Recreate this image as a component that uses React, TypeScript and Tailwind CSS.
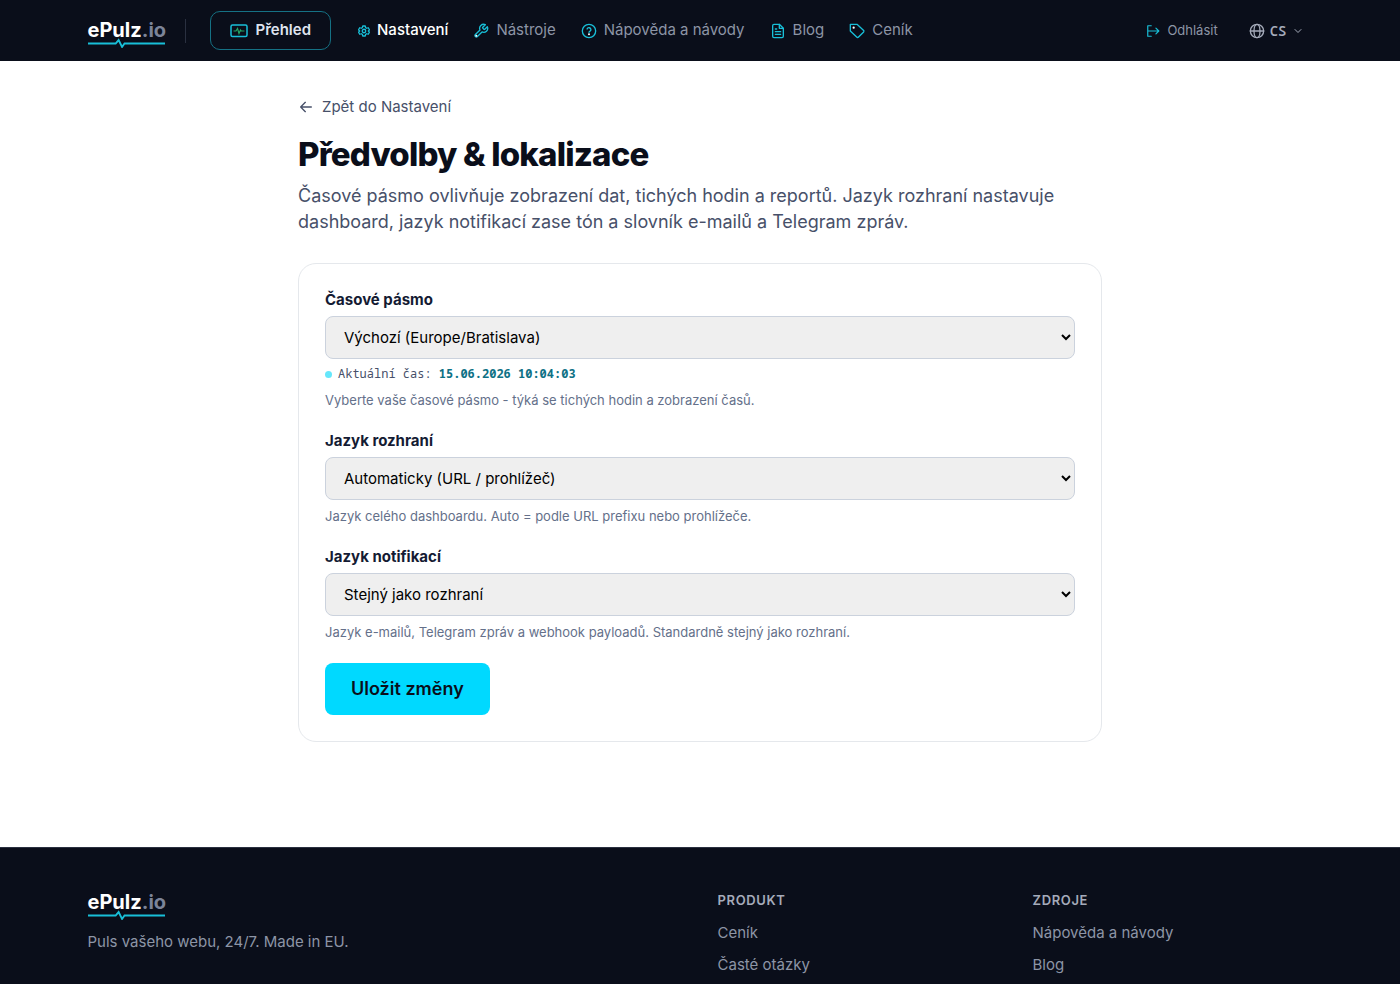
import type { ReactNode } from "react";
import { clsx } from "clsx";

const NAV: { label: string; icon: ReactNode; active?: boolean; small?: boolean }[] = [
  {
    label: "Nastavení",
    active: true,
    small: true,
    icon: (
      <>
        <path
          d="M9.500 2h5l.8 3.300 2 1.200 3.300-1 2.400 4.200-2.400 2.300 2.400 2.300-2.400 4.200-3.300-1-2 1.200-.8 3.300h-5l-.8-3.300-2-1.200-3.300 1L1 14.300 3.400 12 1 9.700l2.400-4.200 3.300 1 2-1.200z"
          strokeWidth="2.600"
        />
        <circle cx="12" cy="12" r="3.500" strokeWidth="2.600" />
      </>
    ),
  },
  {
    label: "Nástroje",
    icon: (
      <>
        <path d="M14.700 6.300a1 1 0 0 0 0 1.400l1.600 1.600a1 1 0 0 0 1.400 0l3.770-3.770a6 6 0 0 1-7.940 7.940l-6.910 6.910a2.120 2.120 0 0 1-3-3l6.910-6.910a6 6 0 0 1 7.940-7.940z" />
        <circle cx="5" cy="19" r="1.500" className="fill-white stroke-none" />
      </>
    ),
  },
  {
    label: "Nápověda a návody",
    icon: (
      <>
        <circle cx="12" cy="12" r="10" />
        <path d="M9.100 9a3 3 0 0 1 5.800 1c0 2-2.900 2.500-2.900 4" />
        <circle cx="12" cy="17" r="1.500" className="fill-white stroke-none" />
      </>
    ),
  },
  {
    label: "Blog",
    icon: (
      <>
        <path d="M14 2H6a2 2 0 0 0-2 2v16a2 2 0 0 0 2 2h12a2 2 0 0 0 2-2V8z" />
        <path d="M14 2v6h6M8 13h8M8 17h8M8 9h2" />
      </>
    ),
  },
  {
    label: "Ceník",
    icon: (
      <>
        <path d="M22 13.400l-7.700 7.700a2 2 0 0 1-2.800 0L2 12V2h10l10 9.200a2 2 0 0 1 0 2.200z" />
        <circle cx="7" cy="7" r="1.700" className="fill-white stroke-none" />
      </>
    ),
  },
];

const FOOTER = [
  { title: "Produkt", links: ["Ceník", "Časté otázky"] },
  { title: "Zdroje", links: ["Nápověda a návody", "Blog"] },
];

function Icon({ children, className }: { children: ReactNode; className?: string }) {
  return (
    <svg
      viewBox="0 0 24 24"
      fill="none"
      stroke="currentColor"
      strokeWidth="2"
      strokeLinecap="round"
      strokeLinejoin="round"
      aria-hidden="true"
      className={clsx("shrink-0", className)}
    >
      {children}
    </svg>
  );
}

function Logo({ className }: { className?: string }) {
  return (
    <a
      href="#"
      className={clsx("flex w-[77px] flex-col text-xl font-bold leading-6 text-white", className)}
    >
      <span>
        ePulz<span className="text-[#7c8498]">.io</span>
      </span>
      <svg viewBox="0 0 78 10" className="-mt-1 h-[10px] w-full" fill="none" aria-hidden="true">
        <path d="M0 5.500H28L31 2L34.500 9L37 5.500H78" stroke="#18bfd8" strokeWidth="1.900" />
      </svg>
    </a>
  );
}

function SelectField({
  id,
  label,
  value,
  hint,
  children,
}: {
  id: string;
  label: string;
  value: string;
  hint: string;
  children?: ReactNode;
}) {
  return (
    <div>
      <label htmlFor={id} className="block text-[15px] leading-5 font-bold text-[#141b33]">
        {label}
      </label>
      <select
        id={id}
        className="mt-1.5 block h-[43px] w-full rounded-lg border border-[#cbd2dd] bg-[#efefef] px-3.5 text-[15px] text-black"
      >
        <option>{value}</option>
      </select>
      {children}
      <p className="mt-1.5 text-[13px] leading-5 text-[#64708a]">{hint}</p>
    </div>
  );
}

export default function App() {
  return (
    <div className="flex min-h-screen flex-col bg-white font-['Inter',sans-serif]">
      <header className="bg-[#0a0e1a]">
        <div className="mx-auto flex h-[61px] max-w-[1225px] items-center">
          <Logo className="mt-1" />
          <span className="ml-5 h-6 w-px bg-[#2a3040]" />
          <a
            href="#"
            className="ml-6 flex h-[39px] items-center gap-2 rounded-[10px] border border-[#157184] px-[19px] text-[15px] font-semibold text-[#dfe3ee]"
          >
            <svg viewBox="0 0 18 14" className="h-3.5 w-[18px]" fill="none" aria-hidden="true">
              <rect x="1" y="1" width="16" height="11.500" rx="1.500" stroke="#18bfd8" strokeWidth="1.500" />
              <path d="M3.500 7H6l1.500-2.500L9 9.500 10.500 6l.8 1H14.500" stroke="#22a565" strokeWidth="1.200" />
            </svg>
            Přehled
          </a>
          <nav className="ml-[27px] flex items-center gap-[25px]">
            {NAV.map((n) => (
              <a
                key={n.label}
                href="#"
                className={clsx(
                  "flex items-center gap-[7px] text-[15px]",
                  n.active ? "font-medium text-white" : "text-[#8d95a6]",
                )}
              >
                <Icon className={clsx("text-[#18bfd8]", n.small ? "size-3" : "size-4")}>{n.icon}</Icon>
                {n.label}
              </a>
            ))}
          </nav>
          <div className="mr-[9px] ml-auto flex items-center gap-[31px] text-[#8d95a6]">
            <a href="#" className="flex items-center gap-[7px] text-[13px]">
              <Icon className="size-3.5 text-[#18bfd8]">
                <path d="M9 3H3v18h6M3 12h19M17 7l5 5-5 5" />
              </Icon>
              Odhlásit
            </a>
            <button className="flex items-center gap-[5px] font-['Noto_Sans_Mono',monospace] text-sm font-semibold text-[#a5abba]">
              <Icon className="size-4">
                <circle cx="12" cy="12" r="10" />
                <path d="M2 12h20" />
                <ellipse cx="12" cy="12" rx="4.500" ry="10" />
              </Icon>
              CS
              <Icon className="size-3">
                <path d="M6 9l6 6 6-6" />
              </Icon>
            </button>
          </div>
        </div>
      </header>

      <main className="mx-auto w-full max-w-[804px] pt-[34px] pb-[105px]">
        <a href="#" className="inline-flex items-center gap-2 text-[15px] leading-6 text-[#475069]">
          <Icon className="size-4">
            <path d="M20 12H4M11 19l-7-7 7-7" />
          </Icon>
          Zpět do Nastavení
        </a>
        <h1 className="mt-3 text-[33px] leading-[42px] font-extrabold tracking-tight text-[#0a0e1a]">
          Předvolby &amp; lokalizace
        </h1>
        <p className="mt-2 text-lg leading-[26px] text-[#475069]">
          Časové pásmo ovlivňuje zobrazení dat, tichých hodin a reportů. Jazyk rozhraní nastavuje
          dashboard, jazyk notifikací zase tón a slovník e-mailů a Telegram zpráv.
        </p>

        <form className="mt-7 flex flex-col gap-[21px] rounded-[18px] border border-[#e5e8ec] p-[26px]">
          <SelectField
            id="timezone"
            label="Časové pásmo"
            value="Výchozí (Europe/Bratislava)"
            hint="Vyberte vaše časové pásmo - týká se tichých hodin a zobrazení časů."
          >
            <p className="mt-[5px] flex items-center gap-1.5 font-['Noto_Sans_Mono',monospace] text-xs leading-5 text-[#475069]">
              <span className="size-[7px] rounded-full bg-[#66e7fb]" />
              <span>
                Aktuální čas: <strong className="font-bold text-[#0e7185]">15.06.2026 10:04:03</strong>
              </span>
            </p>
          </SelectField>
          <SelectField
            id="ui-lang"
            label="Jazyk rozhraní"
            value="Automaticky (URL / prohlížeč)"
            hint="Jazyk celého dashboardu. Auto = podle URL prefixu nebo prohlížeče."
          />
          <SelectField
            id="notify-lang"
            label="Jazyk notifikací"
            value="Stejný jako rozhraní"
            hint="Jazyk e-mailů, Telegram zpráv a webhook payloadů. Standardně stejný jako rozhraní."
          />
          <button
            type="button"
            className="h-[52px] self-start rounded-lg bg-[#00d9ff] px-[26px] text-lg font-semibold text-[#0a0e1a]"
          >
            Uložit změny
          </button>
        </form>
      </main>

      <footer className="flex-1 border-t border-[#2a3040] bg-[#0a0e1a]">
        <div className="mx-auto grid max-w-[1225px] grid-cols-4 gap-x-[35px] pt-[42px]">
          <div className="col-span-2">
            <Logo />
            <p className="mt-2.5 text-[15px] leading-6 text-[#8d95a6]">
              Puls vašeho webu, 24/7. Made in EU.
            </p>
          </div>
          {FOOTER.map((col) => (
            <div key={col.title}>
              <h2 className="text-[13px] leading-5 font-semibold tracking-wider text-[#a5abba] uppercase">
                {col.title}
              </h2>
              <ul className="mt-2.5 flex flex-col gap-[7px]">
                {col.links.map((l) => (
                  <li key={l} className="leading-6">
                    <a href="#" className="text-[15px] text-[#8d95a6]">
                      {l}
                    </a>
                  </li>
                ))}
              </ul>
            </div>
          ))}
        </div>
      </footer>
    </div>
  );
}
